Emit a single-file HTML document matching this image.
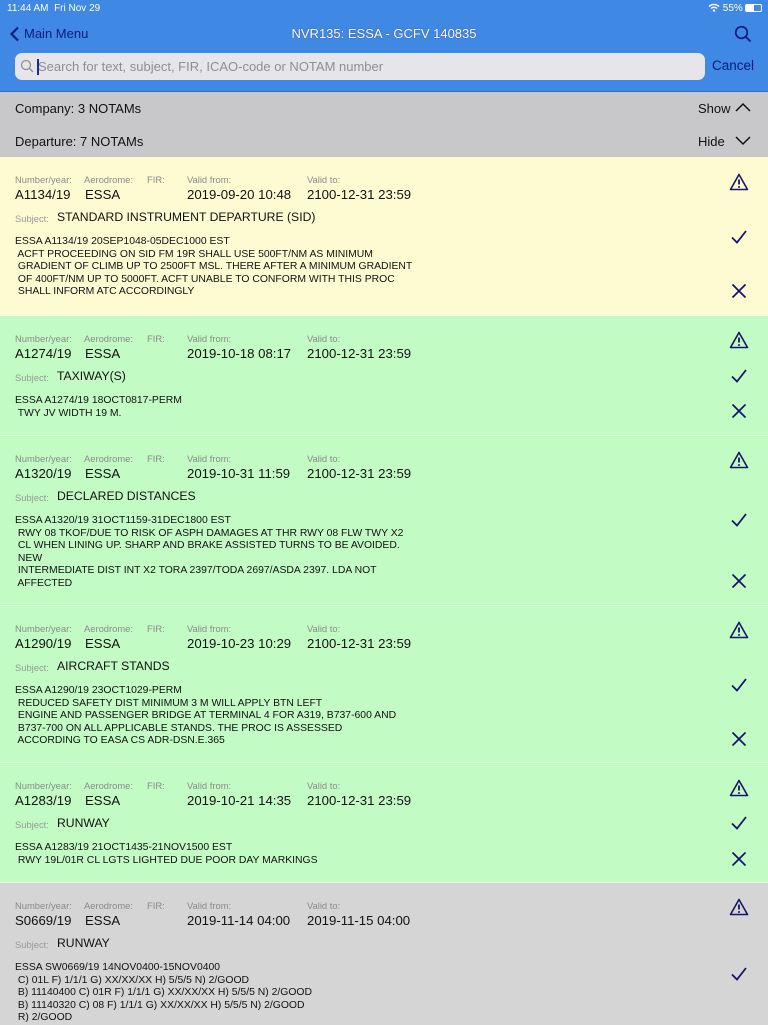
<!DOCTYPE html>
<html><head><meta charset="utf-8"><style>
*{margin:0;padding:0;box-sizing:border-box}
body{width:768px;height:1024px;overflow:hidden;font-family:"Liberation Sans",sans-serif;background:#d5d5d5;position:relative;color:#111}
.a{position:absolute;white-space:nowrap}
.hdr{position:absolute;left:0;top:0;width:768px;height:92px;background:#3f88e4;border-bottom:1px solid #2f6cc0}
.card{position:absolute;left:0;width:768px;border-bottom:1px solid rgba(255,255,255,.5)}
.lb{font-size:9.4px;color:#8a8a8a;top:17px}
.v{font-size:13.2px;top:30px}
.sl{font-size:9.4px;color:#999;top:56px;left:15px}
.sv{font-size:12.2px;top:53px;left:57px}
.body{position:absolute;left:15px;top:79px;font-size:10.4px;line-height:12.5px;white-space:pre}
svg.i{position:absolute;left:729px;width:20px;height:20px}
</style></head><body>
<div class="hdr">
<div class="a" style="left:7px;top:3px;font-size:10px;color:#fff">11:44 AM&nbsp;&nbsp;Fri Nov 29</div>
<div class="a" style="left:708px;top:3px;font-size:10px;color:#fff">
<svg width="12" height="9" viewBox="0 0 12 9" style="vertical-align:-1px"><path d="M1 3.5a7 7 0 0 1 10 0M3 5.5a4.2 4.2 0 0 1 6 0" stroke="#fff" stroke-width="1.4" fill="none"/><circle cx="6" cy="7.6" r="1.2" fill="#fff"/></svg> 55%</div>
<div class="a" style="left:745px;top:4px;width:17px;height:8px;border:1px solid #fff;border-radius:2px"><div style="width:8px;height:6px;background:#fff"></div></div>
<svg class="a" style="left:9px;top:26px" width="12" height="16" viewBox="0 0 12 16"><path d="M9 1.5L2.5 8L9 14.5" stroke="#0d1a7a" stroke-width="2.2" fill="none"/></svg>
<div class="a" style="left:24px;top:26px;font-size:13px;color:#0d1a7a">Main Menu</div>
<div class="a" style="left:0;width:768px;text-align:center;top:26px;font-size:13px;color:#fff;text-shadow:0 0 1px #334">NVR135: ESSA - GCFV 140835</div>
<svg class="a" style="left:734px;top:25px" width="18" height="18" viewBox="0 0 18 18"><circle cx="7.5" cy="7.5" r="5.8" stroke="#0d1a7a" stroke-width="1.7" fill="none"/><path d="M11.8 11.8L16.5 16.5" stroke="#0d1a7a" stroke-width="1.8"/></svg>
<div class="a" style="left:15px;top:53px;width:690px;height:27px;background:#e5e5ea;border-radius:7px"></div>
<svg class="a" style="left:20px;top:59px" width="14" height="14" viewBox="0 0 14 14"><circle cx="6" cy="6" r="4.5" stroke="#8e8e93" stroke-width="1.3" fill="none"/><path d="M9.3 9.3L13 13" stroke="#8e8e93" stroke-width="1.4"/></svg>
<div class="a" style="left:37px;top:59px;width:1.5px;height:16px;background:#1a2a9a"></div>
<div class="a" style="left:38px;top:59px;font-size:13px;color:#8e8e93">Search for text, subject, FIR, ICAO-code or NOTAM number</div>
<div class="a" style="left:712px;top:58px;font-size:13.5px;color:#0d1a7a">Cancel</div>
</div>
<div class="a" style="left:0;top:92px;width:768px;height:65px;background:#c8c8ca"></div>
<div class="a" style="left:15px;top:101px;font-size:13px">Company: 3 NOTAMs</div>
<div class="a" style="left:698px;top:101px;font-size:13px">Show</div>
<svg class="a" style="left:735px;top:102px" width="16" height="10" viewBox="0 0 16 10"><path d="M1 9L8 2L15 9" stroke="#111" stroke-width="1.5" fill="none"/></svg>
<div class="a" style="left:15px;top:134px;font-size:13px">Departure: 7 NOTAMs</div>
<div class="a" style="left:698px;top:134px;font-size:13px">Hide</div>
<svg class="a" style="left:735px;top:136px" width="16" height="10" viewBox="0 0 16 10"><path d="M1 1L8 8L15 1" stroke="#111" stroke-width="1.5" fill="none"/></svg>

<svg width="0" height="0" style="position:absolute"><defs>
<g id="w"><path d="M10 2.5L18.5 17.5H1.5Z" stroke="#14166a" stroke-width="1.6" fill="none" stroke-linejoin="round"/><path d="M10 7.5V12.5" stroke="#14166a" stroke-width="1.8"/><circle cx="10" cy="15" r="1" fill="#14166a"/></g>
<g id="c"><path d="M3 10.5L8 15.5L17 4" stroke="#14166a" stroke-width="1.8" fill="none"/></g>
<g id="x"><path d="M3.5 3.5L16.5 16.5M16.5 3.5L3.5 16.5" stroke="#14166a" stroke-width="1.8"/></g>
</defs></svg>

<!-- card 1 -->
<div class="card" style="top:157px;height:159px;background:#fefbd2">
<div class="a lb" style="left:15px">Number/year:</div><div class="a lb" style="left:84px">Aerodrome:</div><div class="a lb" style="left:147px">FIR:</div><div class="a lb" style="left:187px">Valid from:</div><div class="a lb" style="left:307px">Valid to:</div>
<div class="a v" style="left:15px">A1134/19</div><div class="a v" style="left:85px">ESSA</div><div class="a v" style="left:187px">2019-09-20 10:48</div><div class="a v" style="left:307px">2100-12-31 23:59</div>
<div class="a sl">Subject:</div><div class="a sv">STANDARD INSTRUMENT DEPARTURE (SID)</div>
<div class="body">ESSA A1134/19 20SEP1048-05DEC1000 EST
 ACFT PROCEEDING ON SID FM 19R SHALL USE 500FT/NM AS MINIMUM
 GRADIENT OF CLIMB UP TO 2500FT MSL. THERE AFTER A MINIMUM GRADIENT
 OF 400FT/NM UP TO 5000FT. ACFT UNABLE TO CONFORM WITH THIS PROC
 SHALL INFORM ATC ACCORDINGLY</div>
<svg class="i" style="top:15px"><use href="#w"/></svg><svg class="i" style="top:70px"><use href="#c"/></svg><svg class="i" style="top:124px"><use href="#x"/></svg>
</div>
<!-- card 2 -->
<div class="card" style="top:316px;height:120px;background:#c2fcc4">
<div class="a lb" style="left:15px">Number/year:</div><div class="a lb" style="left:84px">Aerodrome:</div><div class="a lb" style="left:147px">FIR:</div><div class="a lb" style="left:187px">Valid from:</div><div class="a lb" style="left:307px">Valid to:</div>
<div class="a v" style="left:15px">A1274/19</div><div class="a v" style="left:85px">ESSA</div><div class="a v" style="left:187px">2019-10-18 08:17</div><div class="a v" style="left:307px">2100-12-31 23:59</div>
<div class="a sl">Subject:</div><div class="a sv">TAXIWAY(S)</div>
<div class="body">ESSA A1274/19 18OCT0817-PERM
 TWY JV WIDTH 19 M.</div>
<svg class="i" style="top:14px"><use href="#w"/></svg><svg class="i" style="top:50px"><use href="#c"/></svg><svg class="i" style="top:85px"><use href="#x"/></svg>
</div>
<!-- card 3 -->
<div class="card" style="top:436px;height:170px;background:#c2fcc4">
<div class="a lb" style="left:15px">Number/year:</div><div class="a lb" style="left:84px">Aerodrome:</div><div class="a lb" style="left:147px">FIR:</div><div class="a lb" style="left:187px">Valid from:</div><div class="a lb" style="left:307px">Valid to:</div>
<div class="a v" style="left:15px">A1320/19</div><div class="a v" style="left:85px">ESSA</div><div class="a v" style="left:187px">2019-10-31 11:59</div><div class="a v" style="left:307px">2100-12-31 23:59</div>
<div class="a sl">Subject:</div><div class="a sv">DECLARED DISTANCES</div>
<div class="body">ESSA A1320/19 31OCT1159-31DEC1800 EST
 RWY 08 TKOF/DUE TO RISK OF ASPH DAMAGES AT THR RWY 08 FLW TWY X2
 CL WHEN LINING UP. SHARP AND BRAKE ASSISTED TURNS TO BE AVOIDED.
 NEW
 INTERMEDIATE DIST INT X2 TORA 2397/TODA 2697/ASDA 2397. LDA NOT
 AFFECTED</div>
<svg class="i" style="top:14px"><use href="#w"/></svg><svg class="i" style="top:74px"><use href="#c"/></svg><svg class="i" style="top:135px"><use href="#x"/></svg>
</div>
<!-- card 4 -->
<div class="card" style="top:606px;height:157px;background:#c2fcc4">
<div class="a lb" style="left:15px">Number/year:</div><div class="a lb" style="left:84px">Aerodrome:</div><div class="a lb" style="left:147px">FIR:</div><div class="a lb" style="left:187px">Valid from:</div><div class="a lb" style="left:307px">Valid to:</div>
<div class="a v" style="left:15px">A1290/19</div><div class="a v" style="left:85px">ESSA</div><div class="a v" style="left:187px">2019-10-23 10:29</div><div class="a v" style="left:307px">2100-12-31 23:59</div>
<div class="a sl">Subject:</div><div class="a sv">AIRCRAFT STANDS</div>
<div class="body">ESSA A1290/19 23OCT1029-PERM
 REDUCED SAFETY DIST MINIMUM 3 M WILL APPLY BTN LEFT
 ENGINE AND PASSENGER BRIDGE AT TERMINAL 4 FOR A319, B737-600 AND
 B737-700 ON ALL APPLICABLE STANDS. THE PROC IS ASSESSED
 ACCORDING TO EASA CS ADR-DSN.E.365</div>
<svg class="i" style="top:14px"><use href="#w"/></svg><svg class="i" style="top:69px"><use href="#c"/></svg><svg class="i" style="top:123px"><use href="#x"/></svg>
</div>
<!-- card 5 -->
<div class="card" style="top:763px;height:120px;background:#c2fcc4">
<div class="a lb" style="left:15px">Number/year:</div><div class="a lb" style="left:84px">Aerodrome:</div><div class="a lb" style="left:147px">FIR:</div><div class="a lb" style="left:187px">Valid from:</div><div class="a lb" style="left:307px">Valid to:</div>
<div class="a v" style="left:15px">A1283/19</div><div class="a v" style="left:85px">ESSA</div><div class="a v" style="left:187px">2019-10-21 14:35</div><div class="a v" style="left:307px">2100-12-31 23:59</div>
<div class="a sl">Subject:</div><div class="a sv">RUNWAY</div>
<div class="body">ESSA A1283/19 21OCT1435-21NOV1500 EST
 RWY 19L/01R CL LGTS LIGHTED DUE POOR DAY MARKINGS</div>
<svg class="i" style="top:15px"><use href="#w"/></svg><svg class="i" style="top:50px"><use href="#c"/></svg><svg class="i" style="top:86px"><use href="#x"/></svg>
</div>
<!-- card 6 -->
<div class="card" style="top:883px;height:141px;background:#d5d5d5;border:0">
<div class="a lb" style="left:15px">Number/year:</div><div class="a lb" style="left:84px">Aerodrome:</div><div class="a lb" style="left:147px">FIR:</div><div class="a lb" style="left:187px">Valid from:</div><div class="a lb" style="left:307px">Valid to:</div>
<div class="a v" style="left:15px">S0669/19</div><div class="a v" style="left:85px">ESSA</div><div class="a v" style="left:187px">2019-11-14 04:00</div><div class="a v" style="left:307px">2019-11-15 04:00</div>
<div class="a sl">Subject:</div><div class="a sv">RUNWAY</div>
<div class="body">ESSA SW0669/19 14NOV0400-15NOV0400
 C) 01L F) 1/1/1 G) XX/XX/XX H) 5/5/5 N) 2/GOOD
 B) 11140400 C) 01R F) 1/1/1 G) XX/XX/XX H) 5/5/5 N) 2/GOOD
 B) 11140320 C) 08 F) 1/1/1 G) XX/XX/XX H) 5/5/5 N) 2/GOOD
 R) 2/GOOD</div>
<svg class="i" style="top:14px"><use href="#w"/></svg><svg class="i" style="top:81px"><use href="#c"/></svg>
</div>
</body></html>
